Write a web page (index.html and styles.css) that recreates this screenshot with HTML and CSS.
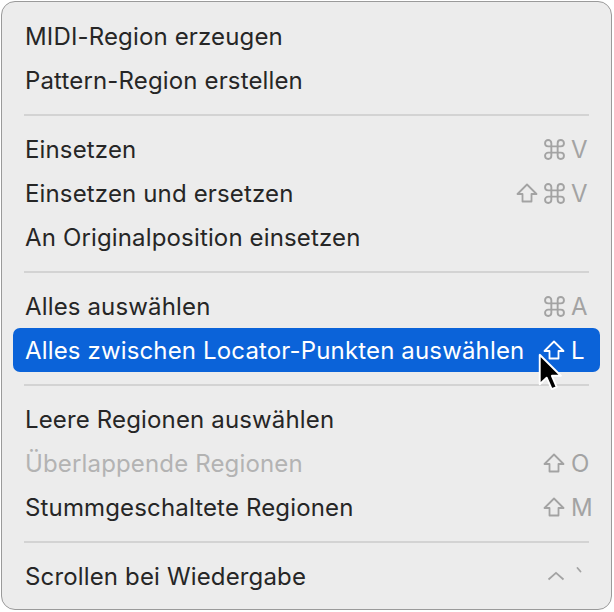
FILE: index.html
```html
<!DOCTYPE html>
<html lang="de">
<head>
  <meta charset="UTF-8" />
  <title>Kontextmenü</title>
  <link rel="stylesheet" href="styles.css">
</head>
<body>
  <div class="menu">
    <div class="item"><span class="label">MIDI-Region erzeugen</span></div>
    <div class="item"><span class="label">Pattern-Region erstellen</span></div>
    <div class="sep"></div>

    <div class="item">
      <span class="label">Einsetzen</span>
      <span class="keys">
        <span class="mods"><svg class="cmd" viewBox="0 0 20 20"><path d="M7 7V4A3 3 0 1 0 4 7H16A3 3 0 1 0 13 4V16A3 3 0 1 0 16 13H4A3 3 0 1 0 7 16Z"/></svg></span>
        <span class="key">V</span>
      </span>
    </div>
    <div class="item">
      <span class="label">Einsetzen und ersetzen</span>
      <span class="keys">
        <span class="mods">
          <svg class="shift" viewBox="0 0 22 20"><path d="M11 1.5L20.5 11H15.5V18.5H6.5V11H1.5Z"/></svg>
          <svg class="cmd" viewBox="0 0 20 20"><path d="M7 7V4A3 3 0 1 0 4 7H16A3 3 0 1 0 13 4V16A3 3 0 1 0 16 13H4A3 3 0 1 0 7 16Z"/></svg>
        </span>
        <span class="key">V</span>
      </span>
    </div>
    <div class="item"><span class="label">An Originalposition einsetzen</span></div>
    <div class="sep"></div>

    <div class="item">
      <span class="label">Alles auswählen</span>
      <span class="keys">
        <span class="mods"><svg class="cmd" viewBox="0 0 20 20"><path d="M7 7V4A3 3 0 1 0 4 7H16A3 3 0 1 0 13 4V16A3 3 0 1 0 16 13H4A3 3 0 1 0 7 16Z"/></svg></span>
        <span class="key">A</span>
      </span>
    </div>
    <div class="item active">
      <span class="label">Alles zwischen Locator-Punkten auswählen</span>
      <span class="keys">
        <span class="mods"><svg class="shift" viewBox="0 0 22 20"><path d="M11 1.5L20.5 11H15.5V18.5H6.5V11H1.5Z"/></svg></span>
        <span class="key">L</span>
      </span>
    </div>
    <div class="sep"></div>

    <div class="item"><span class="label">Leere Regionen auswählen</span></div>
    <div class="item disabled">
      <span class="label">Überlappende Regionen</span>
      <span class="keys">
        <span class="mods"><svg class="shift" viewBox="0 0 22 20"><path d="M11 1.5L20.5 11H15.5V18.5H6.5V11H1.5Z"/></svg></span>
        <span class="key">O</span>
      </span>
    </div>
    <div class="item">
      <span class="label">Stummgeschaltete Regionen</span>
      <span class="keys">
        <span class="mods"><svg class="shift" viewBox="0 0 22 20"><path d="M11 1.5L20.5 11H15.5V18.5H6.5V11H1.5Z"/></svg></span>
        <span class="key">M</span>
      </span>
    </div>
    <div class="sep"></div>

    <div class="item">
      <span class="label">Scrollen bei Wiedergabe</span>
      <span class="keys">
        <span class="mods"><svg class="ctrl" viewBox="0 0 18 10"><path d="M1.5 8.5L9 1.8L16.5 8.5"/></svg></span>
        <span class="key"><svg class="tick" viewBox="0 0 6 6"><path d="M1.5 1L4.5 4.5"/></svg></span>
      </span>
    </div>

    <svg class="pointer" viewBox="0 0 15 23">
      <path d="M1 1V18L5 14.2L7.9 20.8L10.8 19.6L8 13.1H13.2Z"/>
    </svg>
  </div>
</body>
</html>
```

FILE: styles.css
```css
*, *::before, *::after { box-sizing: border-box; }

body {
  margin: 0;
  background-color: #fff;
  font-family: Inter, "Noto Sans", sans-serif;
}

.menu {
  position: relative;
  margin: 1px;
  width: 611px;
  height: 609px;
  padding: 12px 11px 11px;
  background-color: #ececec;
  border: 1px solid #9a9a9a;
  border-radius: 14px;
}

.item {
  height: 44px;
  display: flex;
  align-items: center;
  justify-content: space-between;
  padding: 0 13px 0 12px;
  border-radius: 7px;
  font-size: 24px;
  letter-spacing: 0.15px;
  color: #262626;
}

.item.active {
  background-color: #0b63d9;
  color: #fff;
}

.item.disabled .label {
  color: #b3b3b3;
}

.sep {
  height: 25px;
  display: flex;
  align-items: center;
  padding: 0 11px;
}

.sep::before {
  content: '';
  flex: 1;
  height: 2px;
  background-color: #d3d3d3;
}

.keys {
  display: flex;
  align-items: center;
  gap: 6px;
  color: #a3a3a3;
}

.item.active .keys { color: #fff; }

.mods {
  display: flex;
  align-items: center;
  gap: 6px;
}

.key {
  width: 16px;
  display: flex;
  align-items: center;
}

.keys svg {
  display: block;
  fill: none;
  stroke: currentColor;
  stroke-width: 1.8;
  stroke-linejoin: round;
}

.cmd { width: 21px; height: 21px; }
.shift { width: 22px; height: 20px; }
.ctrl { width: 18px; height: 10px; stroke-width: 2.2; }
.tick { width: 6px; height: 6px; margin: -12px 0 0 5px; stroke-width: 1.6; stroke-linecap: round; }

.pointer {
  position: absolute;
  left: 536px;
  top: 351px;
  width: 26px;
  height: 40px;
  fill: #000;
  stroke: #fff;
  stroke-width: 1.1;
  stroke-linejoin: round;
}
```
